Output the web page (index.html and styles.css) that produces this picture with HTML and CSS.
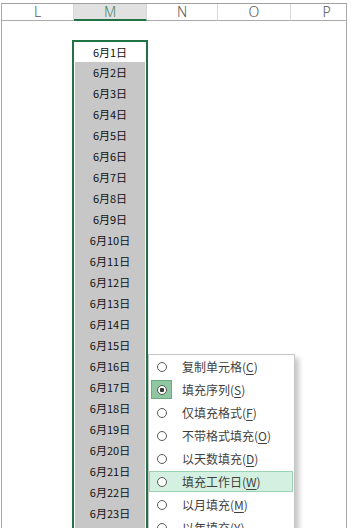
FILE: index.html
```html
<!DOCTYPE html>
<html lang="zh-CN">
<head>
<meta charset="utf-8">
<title>填充序列</title>
<link rel="stylesheet" href="styles.css">
</head>
<body>
<div class="sheet">
  <div class="header">
    <div class="hcell w-l">L</div>
    <div class="hcell w-m active">M</div>
    <div class="hcell w-n">N</div>
    <div class="hcell w-o">O</div>
    <div class="hcell w-p">P</div>
  </div>
  <div class="range">
    <div class="cell first">6月1日</div>
    <div class="cell">6月2日</div>
    <div class="cell">6月3日</div>
    <div class="cell">6月4日</div>
    <div class="cell">6月5日</div>
    <div class="cell">6月6日</div>
    <div class="cell">6月7日</div>
    <div class="cell">6月8日</div>
    <div class="cell">6月9日</div>
    <div class="cell">6月10日</div>
    <div class="cell">6月11日</div>
    <div class="cell">6月12日</div>
    <div class="cell">6月13日</div>
    <div class="cell">6月14日</div>
    <div class="cell">6月15日</div>
    <div class="cell">6月16日</div>
    <div class="cell">6月17日</div>
    <div class="cell">6月18日</div>
    <div class="cell">6月19日</div>
    <div class="cell">6月20日</div>
    <div class="cell">6月21日</div>
    <div class="cell">6月22日</div>
    <div class="cell">6月23日</div>
    <div class="cell"></div>
  </div>
  <div class="menu">
    <div class="item"><span class="mark"><span class="radio"></span></span><span class="label">复制单元格(<u>C</u>)</span></div>
    <div class="item"><span class="mark checked"><span class="radio on"></span></span><span class="label">填充序列(<u>S</u>)</span></div>
    <div class="item"><span class="mark"><span class="radio"></span></span><span class="label">仅填充格式(<u>F</u>)</span></div>
    <div class="item"><span class="mark"><span class="radio"></span></span><span class="label">不带格式填充(<u>O</u>)</span></div>
    <div class="item"><span class="mark"><span class="radio"></span></span><span class="label">以天数填充(<u>D</u>)</span></div>
    <div class="item hover"><span class="mark"><span class="radio"></span></span><span class="label">填充工作日(<u>W</u>)</span></div>
    <div class="item"><span class="mark"><span class="radio"></span></span><span class="label">以月填充(<u>M</u>)</span></div>
    <div class="item"><span class="mark"><span class="radio"></span></span><span class="label">以年填充(<u>Y</u>)</span></div>
  </div>
</div>
</body>
</html>
```

FILE: styles.css
```css
html, body {
  margin: 0;
  padding: 0;
  background: #ffffff;
  overflow: hidden;
}

body {
  width: 351px;
  height: 528px;
  font-family: "Noto Sans CJK SC", "Noto Sans", sans-serif;
}

.sheet {
  position: relative;
  box-sizing: border-box;
  margin: 3px 0 0 1px;
  width: 346px;
  height: 525px;
  border-left: 1px solid #a9a9a9;
  border-right: 1px solid #a9a9a9;
  overflow: hidden;
}

.header {
  display: flex;
  border-top: 1px solid #a0a0a0;
  white-space: nowrap;
}

.hcell {
  flex: none;
  box-sizing: border-box;
  height: 17px;
  border-bottom: 1px solid #ababab;
  border-right: 1px solid #d8d8d8;
  text-align: center;
  font-family: "Noto Sans", "Open Sans", sans-serif;
  font-size: 14px;
  font-weight: 300;
  line-height: 16px;
  color: #555555;
}

.w-l { width: 72px; }
.w-m { width: 73px; }
.w-n { width: 71px; }
.w-o { width: 73px; }
.w-p { width: 72px; }

.hcell.active {
  background: #e1e1e1;
  border-bottom: 2px solid #217346;
  color: #4f8466;
  line-height: 15px;
}

.range {
  box-sizing: border-box;
  margin: 19px 0 0 70px;
  width: 76px;
  padding: 0 1px;
  border: 2px solid #217346;
  border-bottom: none;
}

.cell {
  height: 21px;
  background: #c7c7c7;
  text-align: center;
  font-size: 11px;
  line-height: 21px;
  color: #111111;
}

.cell.first {
  height: 20px;
  line-height: 20px;
  background: #ffffff;
}

.menu {
  position: absolute;
  left: 146px;
  top: 351px;
  width: 147px;
  display: flex;
  flex-direction: column;
  box-sizing: border-box;
  background: #ffffff;
  border: 1px solid #c6c6c6;
  box-shadow: 4px 4px 5px rgba(0, 0, 0, 0.22);
}

.item {
  display: flex;
  align-items: center;
  flex: none;
  box-sizing: border-box;
  height: 21px;
  margin: 1px 1px 1px 0;
  border: 1px solid transparent;
}

.item.hover {
  background: #d4f0e1;
  border-color: #9dd2b2;
}

.mark {
  display: flex;
  align-items: center;
  justify-content: center;
  box-sizing: border-box;
  width: 21px;
  height: 19px;
  margin-left: 1px;
}

.mark.checked {
  background: #8fc7a2;
  border: 1px solid #6aaa80;
}

.radio {
  display: block;
  box-sizing: border-box;
  width: 10px;
  height: 10px;
  border: 1px solid #5a5a5a;
  border-radius: 50%;
  background: #ffffff;
}

.radio.on {
  background: radial-gradient(circle, #3a3a3a 0 2px, #ffffff 2.5px);
}

.label {
  margin-left: 10px;
  font-size: 12px;
  color: #3f3f3f;
  white-space: nowrap;
}

.label u {
  text-underline-offset: 2px;
}
```
